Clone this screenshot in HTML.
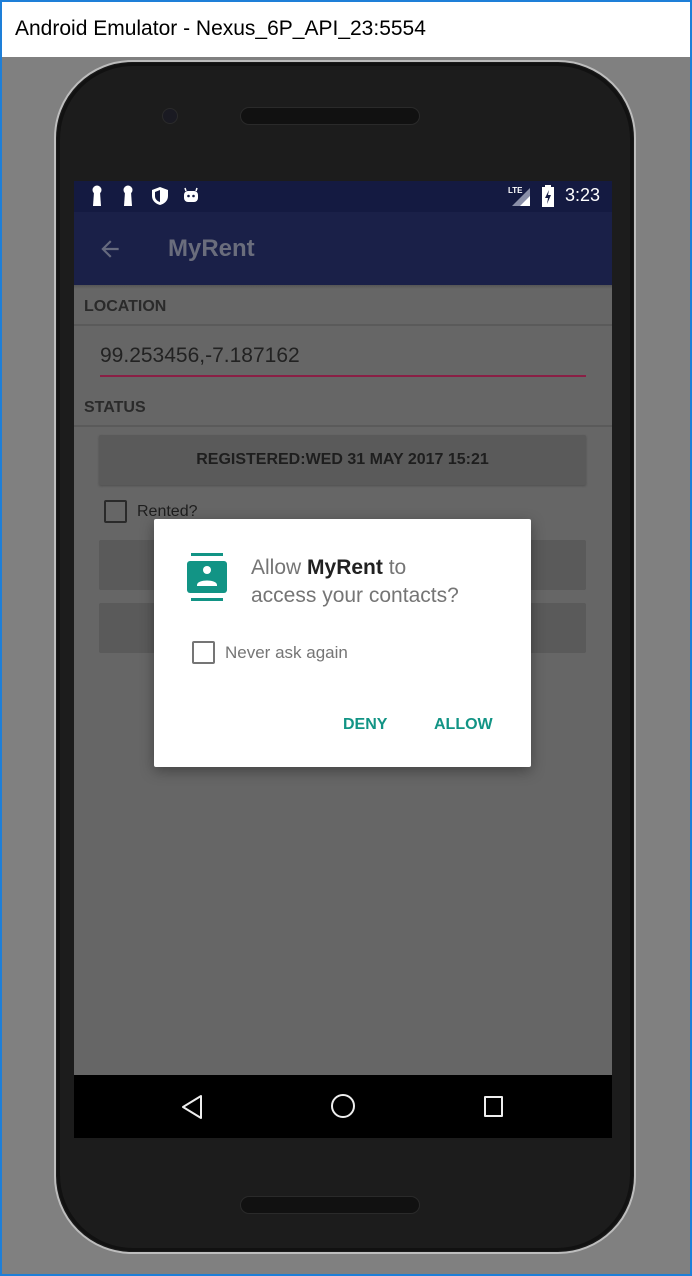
<!DOCTYPE html>
<html><head><style>
*{margin:0;padding:0;box-sizing:border-box}
body{width:692px;height:1276px;overflow:hidden;font-family:"Liberation Sans",sans-serif;position:relative;background:#808080}
.abs{position:absolute}
</style></head><body>
<div class="abs" style="left:1px;top:1px;width:690px;height:56px;background:#fff"></div>
<div class="abs" style="left:15px;top:17px;font-size:21px;color:#000">Android Emulator - Nexus_6P_API_23:5554</div>
<!-- phone -->
<div class="abs" style="left:54px;top:60px;width:582px;height:1194px;border-radius:78px;background:#1a1a1a;border:2px solid #bdbdbd"></div>
<div class="abs" style="left:57px;top:63px;width:576px;height:1188px;border-radius:76px;background:#1c1c1c;border:3px solid #111"></div>
<div class="abs" style="left:240px;top:107px;width:180px;height:18px;border-radius:9px;background:#111;border:1px solid #2a2a2a"></div>
<div class="abs" style="left:162px;top:108px;width:16px;height:16px;border-radius:8px;background:#1a1a22;border:1px solid #2b2b2b"></div>
<div class="abs" style="left:240px;top:1196px;width:180px;height:18px;border-radius:9px;background:#111;border:1px solid #2a2a2a"></div>
<!-- screen -->
<div class="abs" style="left:74px;top:181px;width:538px;height:31px;background:#141a41"></div>
<svg class="abs" style="left:90px;top:185px" width="14" height="22" viewBox="0 0 14 22"><circle cx="7" cy="5" r="4.5" fill="#fff"/><path d="M4 7 L3 21 H11 L10 7 Z" fill="#fff"/></svg>
<svg class="abs" style="left:121px;top:185px" width="14" height="22" viewBox="0 0 14 22"><circle cx="7" cy="5" r="4.5" fill="#fff"/><path d="M4 7 L3 21 H11 L10 7 Z" fill="#fff"/></svg>
<svg class="abs" style="left:150px;top:186px" width="20" height="20" viewBox="0 0 20 20"><path d="M10 1 L18 4 V10 C18 15 14 18 10 19 C6 18 2 15 2 10 V4 Z" fill="#fff"/><path d="M10 4 V16 C7 15 5 13 5 10 V6 Z" fill="#141a41"/></svg>
<svg class="abs" style="left:182px;top:186px" width="18" height="18" viewBox="0 0 18 18"><rect x="2" y="5" width="14" height="11" rx="4" fill="#fff"/><path d="M4 5 L3 2 M14 5 L15 2" stroke="#fff" stroke-width="1.5"/><circle cx="6.5" cy="10" r="1.3" fill="#141a41"/><circle cx="11.5" cy="10" r="1.3" fill="#141a41"/></svg>
<div class="abs" style="left:508px;top:186px;color:#fff;font-size:8px;font-weight:bold">LTE</div>
<svg class="abs" style="left:512px;top:188px" width="20" height="18"><path d="M18 0 V18 H0 Z" fill="#8a8fa8"/><path d="M18 8 V18 H8 Z" fill="#fff"/></svg>
<svg class="abs" style="left:541px;top:185px" width="14" height="22"><rect x="4" y="0" width="6" height="3" fill="#fff"/><rect x="1" y="2" width="12" height="20" fill="#fff"/><path d="M8 5 L4 13 H7 L6 19 L10 10 H7 Z" fill="#141a41"/></svg>
<div class="abs" style="left:565px;top:185px;color:#fff;font-size:18px">3:23</div>
<div class="abs" style="left:74px;top:212px;width:538px;height:73px;background:#1a2048"></div>
<svg class="abs" style="left:97px;top:236px" width="26" height="26" viewBox="0 0 24 24"><path d="M20 11H7.8l5.6-5.6L12 4l-8 8 8 8 1.4-1.4L7.8 13H20z" fill="#666a7e"/></svg>
<div class="abs" style="left:168px;top:235px;color:#6a6d7c;font-size:24px;font-weight:bold">MyRent</div>
<div class="abs" style="left:74px;top:285px;width:538px;height:790px;background:#666"></div>
<div class="abs" style="left:74px;top:285px;width:538px;height:4px;background:linear-gradient(#555,#666)"></div>
<div class="abs" style="left:84px;top:298px;color:#2a2a2a;font-size:16px;font-weight:bold">LOCATION</div>
<div class="abs" style="left:74px;top:324px;width:538px;height:2px;background:#5a5a5a"></div>
<div class="abs" style="left:100px;top:344px;color:#222;font-size:21px">99.253456,-7.187162</div>
<div class="abs" style="left:100px;top:375px;width:486px;height:2px;background:#8a1f45"></div>
<div class="abs" style="left:84px;top:399px;color:#2a2a2a;font-size:16px;font-weight:bold">STATUS</div>
<div class="abs" style="left:74px;top:425px;width:538px;height:2px;background:#5a5a5a"></div>
<div class="abs" style="left:99px;top:435px;width:487px;height:50px;background:#5a5a5a;border-radius:2px;box-shadow:0 1px 2px #4e4e4e;text-align:center;line-height:50px;font-size:16px;color:#1e1e1e;font-weight:bold">REGISTERED:WED 31 MAY 2017 15:21</div>
<div class="abs" style="left:104px;top:500px;width:23px;height:23px;border:2px solid #2a2a2a;border-radius:2px"></div>
<div class="abs" style="left:137px;top:503px;color:#1e1e1e;font-size:16px">Rented?</div>
<div class="abs" style="left:99px;top:540px;width:487px;height:50px;background:#5a5a5a;border-radius:2px"></div>
<div class="abs" style="left:99px;top:603px;width:487px;height:50px;background:#5a5a5a;border-radius:2px"></div>
<div class="abs" style="left:74px;top:1075px;width:538px;height:63px;background:#000"></div>
<svg class="abs" style="left:180px;top:1092px" width="30" height="30" viewBox="0 0 30 30"><path d="M21 4 V26 L3 15 Z" fill="none" stroke="#eee" stroke-width="2" stroke-linejoin="round"/></svg>
<div class="abs" style="left:331px;top:1094px;width:24px;height:24px;border:2px solid #eee;border-radius:50%"></div>
<div class="abs" style="left:484px;top:1096px;width:19px;height:21px;border:2px solid #eee;border-radius:1px"></div>
<!-- dialog -->
<div class="abs" style="left:154px;top:519px;width:377px;height:248px;background:#fff;border-radius:2px;box-shadow:0 4px 14px rgba(0,0,0,.35)"></div>
<svg class="abs" style="left:187px;top:553px" width="40" height="50" viewBox="0 0 40 50"><rect x="4" y="0" width="32" height="3" fill="#129485"/><rect x="4" y="45" width="32" height="3" fill="#129485"/><rect x="0" y="8" width="40" height="32" rx="3" fill="#129485"/><circle cx="20" cy="17" r="4" fill="#fff"/><path d="M10 32 C10 26 30 26 30 32 V33 H10 Z" fill="#fff"/></svg>
<div class="abs" style="left:251px;top:554px;font-size:21px;color:#757575;line-height:28px">Allow <span style="color:#212121;font-weight:bold">MyRent</span> to<br>access your contacts?</div>
<div class="abs" style="left:192px;top:641px;width:23px;height:23px;border:2px solid #757575;border-radius:2px"></div>
<div class="abs" style="left:225px;top:643px;font-size:17px;color:#757575">Never ask again</div>
<div class="abs" style="left:343px;top:716px;font-size:16px;color:#129485;font-weight:bold">DENY</div>
<div class="abs" style="left:434px;top:716px;font-size:16px;color:#129485;font-weight:bold">ALLOW</div>
<div class="abs" style="left:0;top:0;width:692px;height:1276px;border:2px solid #1e7fd8;"></div>
</body></html>
